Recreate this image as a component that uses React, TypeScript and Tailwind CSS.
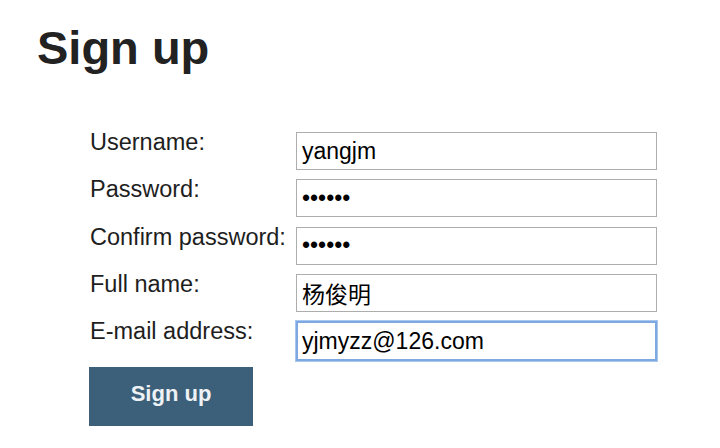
import React from "react";

const font = { fontFamily: '"Liberation Sans", Arial, "Noto Sans CJK SC", sans-serif' };

const rows: { label: string; value: string; type: string; focus?: boolean }[] = [
  { label: "Username:", value: "yangjm", type: "text" },
  { label: "Password:", value: "yangjm", type: "password" },
  { label: "Confirm password:", value: "yangjm", type: "password" },
  { label: "Full name:", value: "杨俊明", type: "text" },
  { label: "E-mail address:", value: "yjmyzz@126.com", type: "text", focus: true },
];

export default function App() {
  return (
    <div className="w-[720px] h-[448px] bg-white text-[#222] overflow-hidden" style={font}>
      <h1 className="pl-[37px] pt-[25px] text-[47px] leading-[46px] font-bold text-[#222]">Sign up</h1>
      <form className="ml-[89px] mt-[61px]" onSubmit={(e) => e.preventDefault()}>
        <div className="grid grid-cols-[207px_361px] gap-y-[9.3px]">
          {rows.map((r) => (
            <React.Fragment key={r.label}>
              <label className="text-[23.5px] leading-[22px] -mt-[1px] pl-[1px] whitespace-nowrap text-[#1e1e1e]">
                {r.label}
              </label>
              <input
                type={r.type}
                readOnly
                value={r.value}
                className={
                  "w-[361px] px-[5px] text-[23px] text-black bg-white outline-none " +
                  (r.focus
                    ? "h-[40px] border-2 border-[#7ea8e2] shadow-[0_0_0_1px_#a9c6ee] pl-[4px]"
                    : "h-[38px] border border-[#adadad]")
                }
                style={font}
              />
            </React.Fragment>
          ))}
        </div>
        <button
          type="submit"
          className="mt-[6px] w-[164px] h-[59px] bg-[#3d607a] text-[#eef2f5] text-[22px] font-bold pb-[6px]"
          style={font}
        >
          Sign up
        </button>
      </form>
    </div>
  );
}
